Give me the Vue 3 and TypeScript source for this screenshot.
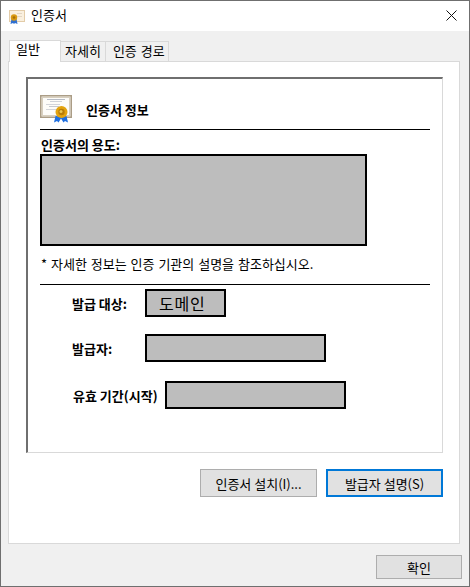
<template>
  <div class="dialog">
    <!-- Title bar -->
    <div class="titlebar">
      <svg class="title-icon" width="16" height="16" viewBox="0 0 16 16">
        <rect x="0.5" y="1.5" width="15" height="11" fill="#faf0df" stroke="#e3cca8" />
        <rect x="8" y="4" width="5" height="1" fill="#e2d6c4" />
        <rect x="8" y="7" width="5" height="1" fill="#e2d6c4" />
        <path d="M2.5 10l-1 5 2.5-1 1 1 1-1 2.5 1-1-5z" fill="#2f6fd0" />
        <circle cx="5" cy="8.5" r="3.2" fill="#d99a12" />
        <circle cx="5" cy="8.5" r="1.3" fill="#a86e08" />
      </svg>
      <span class="title-text">인증서</span>
      <svg class="close-icon" width="11" height="11" viewBox="0 0 11 11">
        <path d="M0.5 0.5l10 10M10.5 0.5l-10 10" stroke="#111" stroke-width="1" fill="none" />
      </svg>
    </div>

    <div class="body">
      <!-- Tabs -->
      <div class="tabs">
        <div v-for="tab in tabs" :key="tab" class="tab" :class="{ active: tab === '일반' }">{{ tab }}</div>
      </div>

      <div class="panel">
        <div class="cert-box">
          <div class="cert-head">
            <svg class="cert-icon" width="32" height="28" viewBox="0 0 32 28">
              <rect x="0.75" y="0.75" width="30.5" height="21.5" fill="#f4f0e8" stroke="#ab9d86" stroke-width="1.5" />
              <rect x="2.5" y="2.5" width="27" height="18" fill="#fdfcf9" stroke="#d8d0c0" />
              <rect x="7" y="4" width="18" height="1" fill="#b7bcc6" />
              <rect x="10" y="6" width="12" height="1" fill="#cfd2d8" />
              <rect x="6" y="9" width="14" height="1" fill="#d3d5da" />
              <rect x="9" y="11" width="10" height="1" fill="#c5c9d0" />
              <rect x="6" y="14" width="10" height="1" fill="#d3d5da" />
              <path d="M15.5 21l-1.5 6.5 3-1.5 1.5 1.5 2.5-4 2.5 4 1.5-1.5 3 1.5-1.5-6.5z" fill="#1f6fe0" />
              <circle cx="21.5" cy="17" r="6" fill="#e3a30e" />
              <circle cx="21.5" cy="17" r="3.2" fill="#b87c08" />
              <circle cx="21" cy="16.5" r="1.5" fill="#ecc650" />
            </svg>
            <span class="cert-title">인증서 정보</span>
          </div>

          <div class="purpose-label">인증서의 용도:</div>
          <div class="redacted purpose-box"></div>
          <div class="note">* 자세한 정보는 인증 기관의 설명을 참조하십시오.</div>

          <div class="fields">
            <div class="field issued-to">
              <span class="field-label">발급 대상:</span>
              <div class="redacted domain">도메인</div>
            </div>
            <div class="field issuer">
              <span class="field-label">발급자:</span>
              <div class="redacted value"></div>
            </div>
            <div class="field validity">
              <span class="field-label">유효 기간(시작)</span>
              <div class="redacted value"></div>
            </div>
          </div>
        </div>

        <div class="panel-actions">
          <button class="btn">인증서 설치(I)...</button>
          <button class="btn focused">발급자 설명(S)</button>
        </div>
      </div>

      <div class="footer">
        <button class="btn ok">확인</button>
      </div>
    </div>
  </div>
</template>

<script setup lang="ts">
const tabs: string[] = ['일반', '자세히', '인증 경로']
</script>

<style>
html,
body {
  margin: 0;
  background: #ffffff;
}
</style>

<style scoped>
.dialog {
  box-sizing: border-box;
  width: 470px;
  height: 587px;
  display: flex;
  flex-direction: column;
  background: #ffffff;
  border: 1px solid #6f6f6f;
  font-family: "Noto Sans CJK KR", "Liberation Sans", sans-serif;
  font-size: 13px;
  font-weight: 400;
  color: #000000;
}

.titlebar {
  height: 30px;
  display: flex;
  align-items: center;
  padding: 0 12px 0 8px;
  flex-shrink: 0;
}

.title-icon {
  margin-top: 1px;
}

.title-text {
  margin-left: 6px;
  margin-bottom: 2px;
  line-height: 16px;
}

.close-icon {
  margin-left: auto;
  margin-top: -1px;
}

.body {
  flex: 1;
  display: flex;
  flex-direction: column;
  background: #f0f0f0;
  padding: 9px 9px 0 7px;
}

.tabs {
  display: flex;
  height: 21px;
  padding-left: 1px;
  align-items: flex-end;
}

.tab {
  box-sizing: border-box;
  height: 20px;
  padding: 0 4px;
  margin-right: -1px;
  line-height: 18px;
  background: #f0f0f0;
  border: 1px solid #d9d9d9;
  border-bottom: none;
}

.tab.active {
  height: 22px;
  width: 52px;
  padding: 0 6px;
  line-height: 16px;
  background: #ffffff;
  margin-bottom: -1px;
  position: relative;
  z-index: 1;
  margin-right: -1px;
}

.tab + .tab + .tab {
  padding: 0 3px 0 7px;
  word-spacing: 1px;
}

.panel {
  box-sizing: border-box;
  height: 483px;
  display: flex;
  flex-direction: column;
  background: #ffffff;
  border: 1px solid #d9d9d9;
  padding: 15px 16px 0 17px;
}

.cert-box {
  box-sizing: border-box;
  height: 376px;
  padding: 0 12px 0 12px;
  border-top: 2px solid #6f6f6f;
  border-left: 2px solid #6f6f6f;
  border-right: 1px solid #d9d9d9;
  border-bottom: 1px solid #d9d9d9;
}

.cert-head {
  display: flex;
  align-items: center;
  height: 51px;
  box-sizing: border-box;
  padding: 16px 0 0 0;
  border-bottom: 1px solid #000000;
}

.cert-icon {
  flex-shrink: 0;
  margin-bottom: 6px;
}

.cert-title {
  margin-left: 14px;
  margin-bottom: 6px;
  font-weight: 700;
}

.purpose-label {
  margin: 7px 0 1px 1px;
  line-height: 16px;
  font-weight: 700;
}

.redacted {
  box-sizing: border-box;
  background: #bdbdbd;
  border: 2px solid #000000;
}

.purpose-box {
  width: 327px;
  height: 92px;
}

.note {
  margin-top: 9px;
  line-height: 18px;
  height: 30px;
  box-sizing: border-box;
  border-bottom: 1px solid #000000;
  padding-left: 1px;
  word-spacing: 1px;
}

.fields {
  padding-left: 32px;
}

.field {
  display: flex;
  align-items: center;
}

.field-label {
  font-weight: 700;
  flex-shrink: 0;
}

.issued-to {
  margin-top: 4px;
}

.issued-to .field-label,
.issuer .field-label {
  width: 73px;
}

.issuer {
  margin-top: 17px;
}

.validity {
  margin-top: 19px;
  padding-left: 1px;
}

.validity .field-label {
  width: 92px;
}

.domain {
  width: 81px;
  height: 28px;
  padding-left: 12px;
  font-size: 16px;
  letter-spacing: 0.8px;
  line-height: 24px;
}

.value {
  width: 181px;
  height: 28px;
}

.panel-actions {
  display: flex;
  justify-content: flex-end;
  gap: 9px;
  margin-top: 16px;
}

.btn {
  box-sizing: border-box;
  width: 117px;
  height: 28px;
  padding: 0;
  background: #e1e1e1;
  border: 1px solid #adadad;
  font-family: inherit;
  font-size: 13px;
  color: #000000;
}

.btn.focused {
  border: 2px solid #0078d7;
}

.footer {
  display: flex;
  justify-content: flex-end;
  padding: 11px 0 0 0;
  margin-right: -2px;
}

.btn.ok {
  width: 86px;
  height: 24px;
}
</style>
